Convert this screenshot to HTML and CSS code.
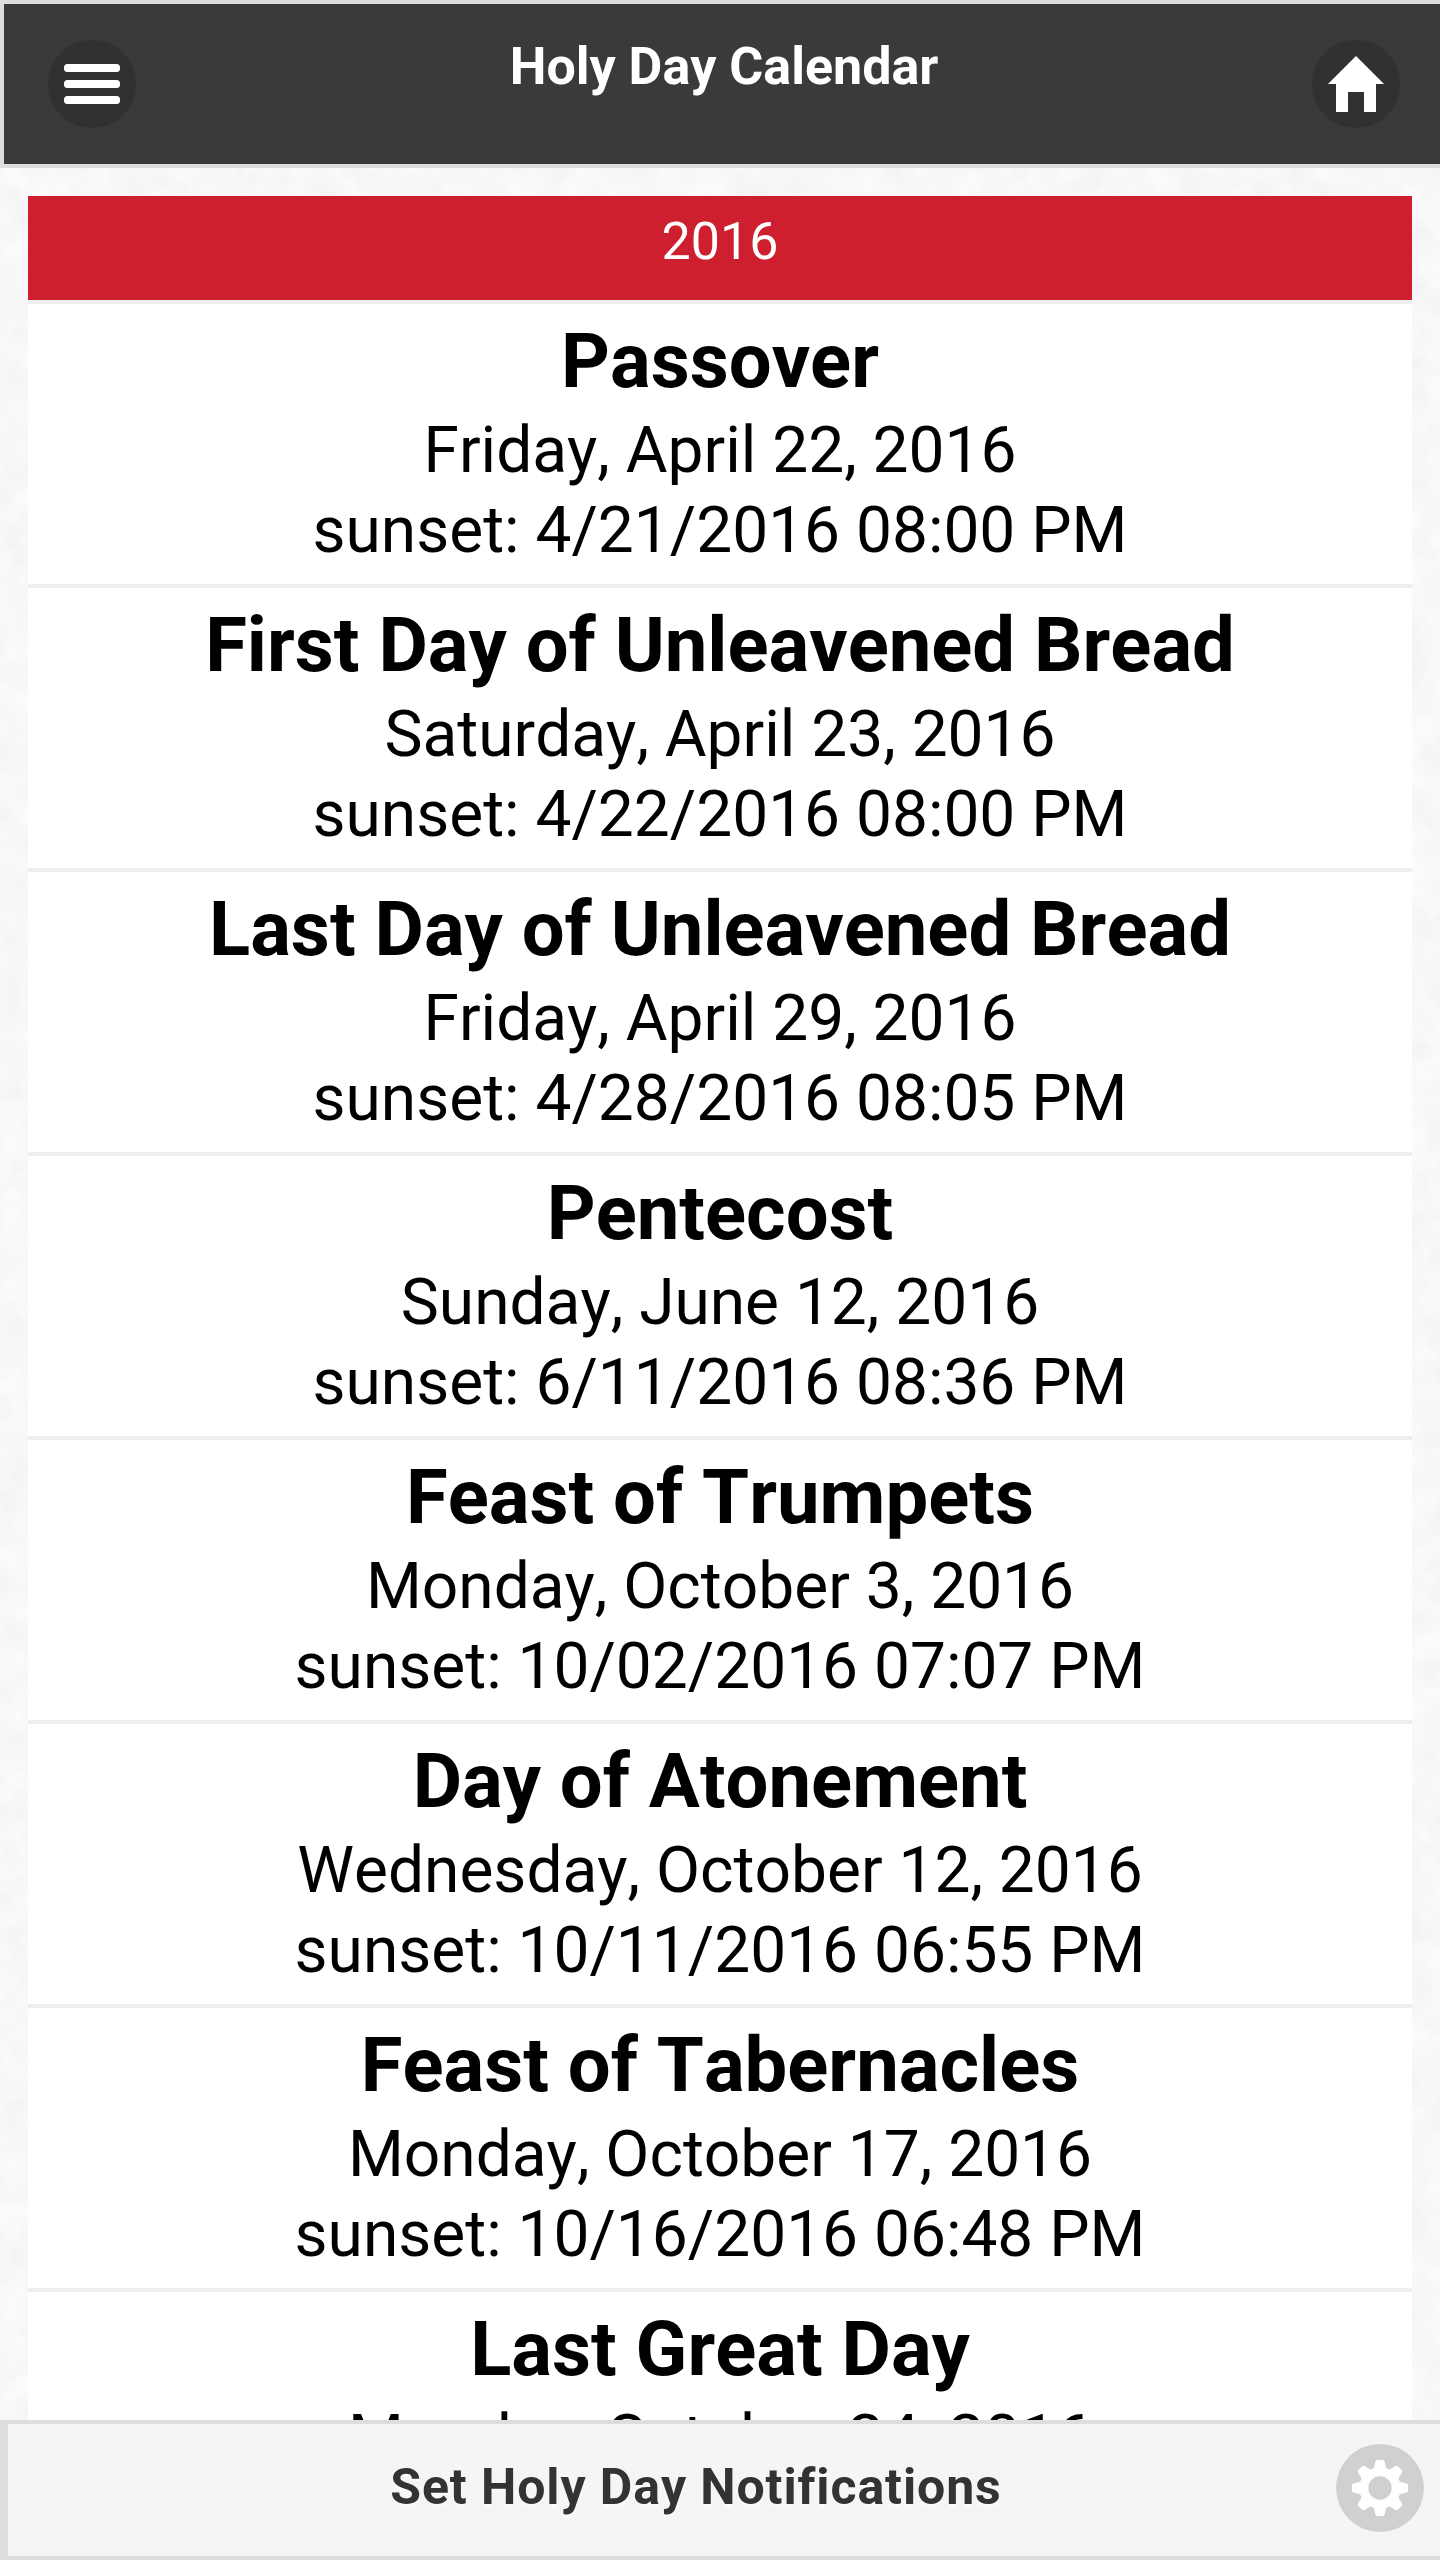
FILE: index.html
```html
<!DOCTYPE html>
<html lang="en">
<head>
<meta charset="utf-8">
<title>Holy Day Calendar</title>
<link rel="stylesheet" href="styles.css">
</head>
<body>
<div class="app">
  <svg class="texture" aria-hidden="true">
    <filter id="paper" x="0" y="0" width="100%" height="100%">
      <feTurbulence type="fractalNoise" baseFrequency="0.035" numOctaves="3" seed="4"/>
      <feColorMatrix values="0 0 0 0 0  0 0 0 0 0  0 0 0 0 0  0.05 0 0 0 -0.012"/>
    </filter>
    <rect class="texture-fill" width="100%" height="100%" filter="url(#paper)"/>
  </svg>
  <header class="topbar">
    <a class="round-btn" aria-label="Menu">
      <svg class="icon" viewBox="0 0 56 56"><rect x="0" y="8" width="56" height="8" rx="3.5"/><rect x="0" y="24" width="56" height="8" rx="3.5"/><rect x="0" y="40" width="56" height="8" rx="3.5"/></svg>
    </a>
    <h1 class="topbar-title">Holy Day Calendar</h1>
    <a class="round-btn" aria-label="Home">
      <svg class="icon" viewBox="0 0 56 56"><path d="M28 0 56 28H48V56H36V36H20V56H8V28H0Z"/></svg>
    </a>
  </header>
  <main class="content">
    <div class="year">2016</div>
    <ul class="days">
      <li class="day"><h2 class="day-name">Passover</h2><p class="day-line">Friday, April 22, 2016</p><p class="day-line">sunset: 4/21/2016 08:00 PM</p></li>
      <li class="day"><h2 class="day-name">First Day of Unleavened Bread</h2><p class="day-line">Saturday, April 23, 2016</p><p class="day-line">sunset: 4/22/2016 08:00 PM</p></li>
      <li class="day"><h2 class="day-name">Last Day of Unleavened Bread</h2><p class="day-line">Friday, April 29, 2016</p><p class="day-line">sunset: 4/28/2016 08:05 PM</p></li>
      <li class="day"><h2 class="day-name">Pentecost</h2><p class="day-line">Sunday, June 12, 2016</p><p class="day-line">sunset: 6/11/2016 08:36 PM</p></li>
      <li class="day"><h2 class="day-name">Feast of Trumpets</h2><p class="day-line">Monday, October 3, 2016</p><p class="day-line">sunset: 10/02/2016 07:07 PM</p></li>
      <li class="day"><h2 class="day-name">Day of Atonement</h2><p class="day-line">Wednesday, October 12, 2016</p><p class="day-line">sunset: 10/11/2016 06:55 PM</p></li>
      <li class="day"><h2 class="day-name">Feast of Tabernacles</h2><p class="day-line">Monday, October 17, 2016</p><p class="day-line">sunset: 10/16/2016 06:48 PM</p></li>
      <li class="day"><h2 class="day-name">Last Great Day</h2><p class="day-line">Monday, October 24, 2016</p></li>
    </ul>
  </main>
  <footer class="bottombar">
    <span class="bottombar-label">Set Holy Day Notifications</span>
    <a class="round-btn round-btn-light" aria-label="Settings">
      <svg class="icon" viewBox="0 0 56 56">
        <circle class="gear-ring" cx="28" cy="28" r="16.2"/>
        <path d="M23.5 1.5Q23.7 0 25 0H31Q32.3 0 32.5 1.5L35 11H21Z"/>
        <path d="M23.5 1.5Q23.7 0 25 0H31Q32.3 0 32.5 1.5L35 11H21Z" transform="rotate(45 28 28)"/>
        <path d="M23.5 1.5Q23.7 0 25 0H31Q32.3 0 32.5 1.5L35 11H21Z" transform="rotate(90 28 28)"/>
        <path d="M23.5 1.5Q23.7 0 25 0H31Q32.3 0 32.5 1.5L35 11H21Z" transform="rotate(135 28 28)"/>
        <path d="M23.5 1.5Q23.7 0 25 0H31Q32.3 0 32.5 1.5L35 11H21Z" transform="rotate(180 28 28)"/>
        <path d="M23.5 1.5Q23.7 0 25 0H31Q32.3 0 32.5 1.5L35 11H21Z" transform="rotate(225 28 28)"/>
        <path d="M23.5 1.5Q23.7 0 25 0H31Q32.3 0 32.5 1.5L35 11H21Z" transform="rotate(270 28 28)"/>
        <path d="M23.5 1.5Q23.7 0 25 0H31Q32.3 0 32.5 1.5L35 11H21Z" transform="rotate(315 28 28)"/>
      </svg>
    </a>
  </footer>
</div>
</body>
</html>
```
FILE: styles.css
```css
* { box-sizing: border-box; }
html, body { margin: 0; padding: 0; }
body {
  font-family: Roboto, "Liberation Sans", sans-serif;
  font-kerning: none;
  color: #000;
  background: #fbfbfb;
}
.app {
  position: relative;
  z-index: 0;
  height: 100vh;
  overflow: hidden;
}
.texture {
  position: absolute;
  inset: 0;
  z-index: -1;
  width: 100%;
  height: 100%;
}
.texture-fill { fill: #000; }
.topbar {
  display: flex;
  justify-content: space-between;
  align-items: center;
  height: 168px;
  padding: 0 40px 0 44px;
  background: #3a3a3a;
  border: 4px solid #ddd;
  border-right: 0;
}
.topbar-title {
  margin: 0 0 34px;
  font-size: 52px;
  line-height: 64px;
  font-weight: 700;
  color: #fff;
}
.round-btn {
  display: flex;
  align-items: center;
  justify-content: center;
  width: 88px;
  height: 88px;
  border-radius: 50%;
  background: #313131;
}
.icon { width: 56px; height: 56px; fill: #fff; display: block; }
.content { padding: 28px 28px 0; }
.year {
  height: 108px;
  padding-top: 14px;
  font-size: 52px;
  line-height: 64px;
  text-align: center;
  color: #fff;
  background: #ce1f2e;
  border-bottom: 4px solid #eee;
}
.days { list-style: none; margin: 0; padding: 0; }
.day {
  height: 284px;
  padding-top: 8px;
  text-align: center;
  background: #fff;
  border-bottom: 4px solid #eee;
}
.day-name {
  margin: 0 0 1px;
  font-size: 76px;
  line-height: 98px;
  font-weight: 700;
}
.day-line {
  margin: 0;
  font-size: 64px;
  line-height: 80px;
}
.bottombar {
  position: absolute;
  left: 0;
  right: 0;
  bottom: 0;
  display: flex;
  align-items: center;
  justify-content: center;
  height: 140px;
  padding: 0 56px 6px 0;
  background: #f5f5f5;
  border: 4px solid #ddd;
  border-left-width: 8px;
  border-right: 0;
}
.bottombar-label {
  font-size: 50px;
  line-height: 60px;
  font-weight: 700;
  letter-spacing: 0.9px;
  color: #333;
  text-shadow: 0 3px 2px #fafafa;
}
.round-btn-light {
  position: absolute;
  right: 16px;
  top: 20px;
  background: #d0d0d0;
}
.gear-ring { fill: none; stroke: #fff; stroke-width: 9; }
```
